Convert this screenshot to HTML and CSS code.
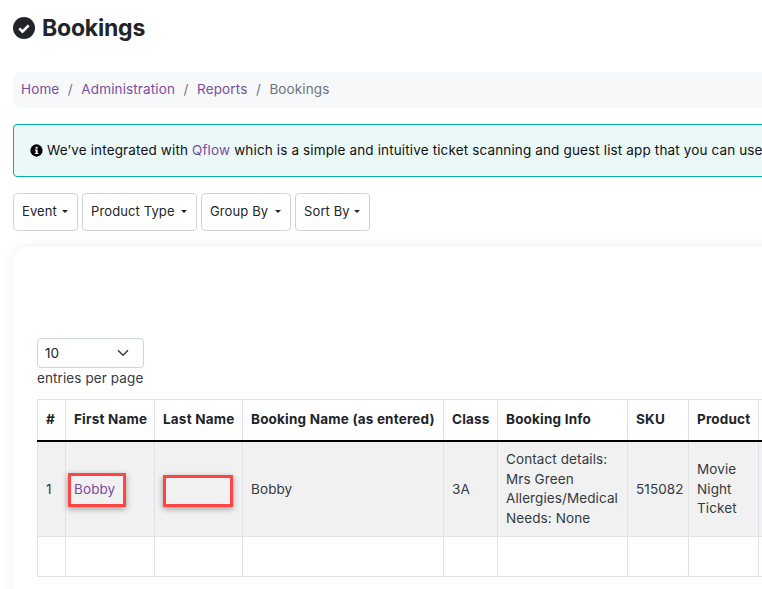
FILE: index.html
```html
<!DOCTYPE html>
<html lang="en">
<head>
<meta charset="utf-8">
<title>Bookings</title>
<link rel="stylesheet" href="styles.css">
</head>
<body>
<main class="page">
  <h1 class="title">
    <svg class="title-icon" viewBox="0 0 22 22" aria-hidden="true"><circle cx="11" cy="11" r="11" fill="#212529"/><path d="M6.3 11.4l3.2 3.2 6.2-6.2" fill="none" stroke="#fff" stroke-width="2.6"/></svg>
    Bookings
  </h1>
  <nav class="crumbs">
    <a href="#">Home</a><span class="sep">/</span><a href="#">Administration</a><span class="sep">/</span><a href="#">Reports</a><span class="sep">/</span><span class="current">Bookings</span>
  </nav>
  <div class="alert">
    <svg class="info" viewBox="0 0 14 14" aria-hidden="true"><circle cx="7" cy="7" r="6.6" fill="#000"/><rect x="6" y="3" width="2.2" height="2" fill="#fff"/><path d="M5.4 6h2.8v3.6h.9v1.3H5.2V9.6h1V7.3h-.8z" fill="#fff"/></svg>
    <span>We’ve integrated with <a href="#">Qflow</a> which is a simple and intuitive ticket scanning and guest list app that you can use</span>
  </div>
  <div class="filters">
    <button class="filter f-event">Event<i class="caret"></i></button>
    <button class="filter f-product">Product Type<i class="caret"></i></button>
    <button class="filter f-group">Group By<i class="caret"></i></button>
    <button class="filter f-sort">Sort By<i class="caret"></i></button>
  </div>
  <section class="card">
    <div class="select">10
      <svg class="chev" viewBox="0 0 12 8" aria-hidden="true"><path d="M1 1.3l5 5 5-5" fill="none" stroke="#343a40" stroke-width="1.5"/></svg>
    </div>
    <div class="per-page">entries per page</div>
    <table class="grid">
      <colgroup>
        <col class="c1"><col class="c2"><col class="c3"><col class="c4"><col class="c5"><col class="c6"><col class="c7"><col class="c8"><col class="c9">
      </colgroup>
      <thead>
        <tr><th>#</th><th>First Name</th><th>Last Name</th><th>Booking Name (as entered)</th><th>Class</th><th>Booking Info</th><th>SKU</th><th>Product</th><th></th></tr>
      </thead>
      <tbody>
        <tr class="filled">
          <td>1</td>
          <td class="mark-cell"><a href="#">Bobby</a><span class="mark mark-first"></span></td>
          <td class="mark-cell"><span class="mark mark-last"></span></td>
          <td>Bobby</td>
          <td>3A</td>
          <td>Contact details:<br>Mrs Green<br>Allergies/Medical<br>Needs: None</td>
          <td>515082</td>
          <td>Movie<br>Night<br>Ticket</td>
          <td></td>
        </tr>
        <tr class="empty"><td></td><td></td><td></td><td></td><td></td><td></td><td></td><td></td><td></td></tr>
      </tbody>
    </table>
  </section>
</main>
</body>
</html>
```

FILE: styles.css
```css
* { box-sizing: border-box; }
html, body { margin: 0; height: 589px; overflow: hidden; background: #fff; }
body { font-family: Inter, "Liberation Sans", sans-serif; font-size: 13.5px; letter-spacing: .1px; color: #212529; }
a { color: #7b4f9d; text-decoration: none; }

.page { width: 1000px; padding: 13px 0 0 13px; }

.title { display: flex; align-items: center; gap: 7px; margin: 0 0 30px; height: 29px; font-size: 23px; font-weight: 700; color: #212529; letter-spacing: -.2px; }
.title-icon { width: 22px; height: 22px; }

.crumbs { display: flex; align-items: center; height: 36px; padding: 0 0 2px 8px; background: #f7f8fa; border-radius: 8px 0 0 8px; letter-spacing: .13px; }
.sep { margin: 0 8.5px; color: #6c757d; }
.current { color: #6c757d; }

.alert { display: flex; align-items: center; gap: 4px; height: 53px; margin-top: 16px; padding: 0 0 1px 16px; background: #ebf8f8; border: 1px solid #00b3a0; border-radius: 4px 0 0 4px; color: #111; white-space: nowrap; letter-spacing: .14px; }
.info { width: 13px; height: 13px; flex: none; }

.filters { display: flex; gap: 4px; margin-top: 16px; }
.filter { display: flex; align-items: center; height: 38px; padding: 0 9px 2px 8px; background: #fff; border: 1px solid #ced4da; border-radius: 4px; font: inherit; font-size: 13px; letter-spacing: .12px; color: #212529; }
.f-event { width: 65px; }
.f-product { width: 115px; }
.f-group { width: 90px; }
.f-sort { width: 75px; }
.caret { width: 0; height: 0; margin-left: auto; border: 3.5px solid transparent; border-top-color: #212529; border-bottom: 0; }

.card { height: 400px; margin-top: 16px; padding: 91px 0 0 24px; background: #fff; border-radius: 16px 0 0 0; box-shadow: 0 0 14px rgba(0, 0, 0, .07); }

.select { display: flex; align-items: center; justify-content: space-between; width: 107px; height: 30px; padding: 0 14px 0 7px; border: 1px solid #ced4da; border-radius: 4px; }
.chev { width: 12px; height: 8px; }
.per-page { margin-top: 1px; line-height: 19px; color: #343a40; }

.grid { width: 721px; margin-top: 11px; border-collapse: collapse; table-layout: fixed; }
.c1 { width: 28px; } .c2 { width: 89px; } .c3 { width: 88px; } .c4 { width: 201px; } .c5 { width: 54px; }
.c6 { width: 130px; } .c7 { width: 61px; } .c8 { width: 70px; } .c9 { width: 40px; }
.grid th, .grid td { padding: 0 8px; border: 1px solid #dee2e6; text-align: left; }
.grid th { height: 41px; padding-bottom: 2px; font-weight: 700; letter-spacing: .2px; white-space: nowrap; color: #212529; border-bottom: 2px solid #000; }
.grid td { line-height: 19.5px; color: #343a40; }
.filled td { height: 96px; padding-top: 1px; background: #f1f1f1; }
.empty td { height: 40px; }

.mark-cell { position: relative; }
.mark { position: absolute; border: 3px solid #ff4444; box-shadow: 0 2px 6px rgba(0, 0, 0, .35); pointer-events: none; }
.mark-first { left: 2px; top: 31px; width: 58px; height: 34px; }
.mark-last { left: 8px; top: 33px; width: 70px; height: 32px; }
```
